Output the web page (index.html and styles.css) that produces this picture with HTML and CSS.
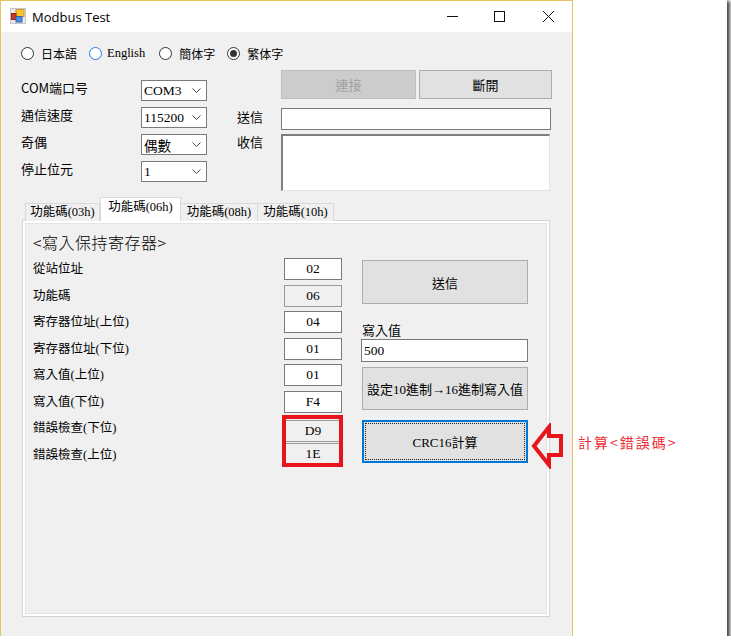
FILE: index.html
```html
<!DOCTYPE html>
<html lang="zh-Hant">
  <head>
    <meta charset="UTF-8" />
    <title>Modbus Test</title>
    <link rel="stylesheet" href="styles.css">
  </head>
  <body>
    <div class="shot">
      <div class="window">
        <div class="titlebar">
          <svg class="app-icon" width="16" height="16" viewBox="0 0 16 16">
            <rect x="0.5" y="0.5" width="15" height="15" fill="#e9e9e9" stroke="#c8c8c8" />
            <rect x="6" y="1.5" width="8" height="7" fill="#f7c531" stroke="#d9922a" />
            <rect x="1.5" y="5.5" width="4.5" height="6" fill="#d8332a" stroke="#9c1f18" />
            <rect x="6" y="8.5" width="6" height="5.5" fill="#4d8fe0" stroke="#2d62b5" />
          </svg>
          <span class="title">Modbus Test</span>
          <div class="caption-btns">
            <svg class="cap cap-min" width="11" height="11" viewBox="0 0 11 11"><line x1="0" y1="5.5" x2="11" y2="5.5" stroke="#111" /></svg>
            <svg class="cap cap-max" width="11" height="11" viewBox="0 0 11 11"><rect x="0.5" y="0.5" width="10" height="10" fill="none" stroke="#111" /></svg>
            <svg class="cap cap-close" width="11" height="11" viewBox="0 0 11 11"><path d="M0 0 L11 11 M11 0 L0 11" stroke="#111" /></svg>
          </div>
        </div>

        <div class="client">
          <div class="langs">
            <label class="radio"><span class="dot"></span><span>日本語</span></label>
            <label class="radio hover"><span class="dot"></span><span>English</span></label>
            <label class="radio"><span class="dot"></span><span>簡体字</span></label>
            <label class="radio checked"><span class="dot"></span><span>繁体字</span></label>
          </div>

          <div class="conn">
            <div class="serial">
              <span class="lbl">COM端口号</span>
              <div class="combo"><span>COM3</span><svg class="chev" width="9" height="5" viewBox="0 0 9 5"><path d="M0.5 0.5 L4.5 4.5 L8.5 0.5" fill="none" stroke="#444" /></svg></div>
              <span class="lbl">通信速度</span>
              <div class="combo"><span>115200</span><svg class="chev" width="9" height="5" viewBox="0 0 9 5"><path d="M0.5 0.5 L4.5 4.5 L8.5 0.5" fill="none" stroke="#444" /></svg></div>
              <span class="lbl">奇偶</span>
              <div class="combo"><span>偶數</span><svg class="chev" width="9" height="5" viewBox="0 0 9 5"><path d="M0.5 0.5 L4.5 4.5 L8.5 0.5" fill="none" stroke="#444" /></svg></div>
              <span class="lbl">停止位元</span>
              <div class="combo"><span>1</span><svg class="chev" width="9" height="5" viewBox="0 0 9 5"><path d="M0.5 0.5 L4.5 4.5 L8.5 0.5" fill="none" stroke="#444" /></svg></div>
            </div>

            <div class="io">
              <div class="io-buttons">
                <button class="btn btn-connect" disabled>連接</button>
                <button class="btn btn-close">斷開</button>
              </div>
              <div class="io-row">
                <span class="lbl">送信</span>
                <div class="textbox send-box"></div>
              </div>
              <div class="io-row recv-row">
                <span class="lbl">收信</span>
                <div class="recv-box"></div>
              </div>
            </div>
          </div>

          <div class="tabs">
            <div class="tab-heads">
              <span class="tab t1">功能碼(03h)</span>
              <span class="tab t2 active">功能碼(06h)</span>
              <span class="tab t3">功能碼(08h)</span>
              <span class="tab t4">功能碼(10h)</span>
            </div>
            <div class="tab-page">
              <div class="heading">&lt;寫入保持寄存器&gt;</div>
              <div class="regs">
                <span class="reg-lbl">從站位址</span><div class="cell">02</div>
                <span class="reg-lbl">功能碼</span><div class="cell readonly">06</div>
                <span class="reg-lbl">寄存器位址(上位)</span><div class="cell">04</div>
                <span class="reg-lbl">寄存器位址(下位)</span><div class="cell">01</div>
                <span class="reg-lbl">寫入值(上位)</span><div class="cell">01</div>
                <span class="reg-lbl">寫入值(下位)</span><div class="cell">F4</div>
                <span class="reg-lbl">錯誤檢查(下位)</span><div class="cell readonly crc-lo">D9</div>
                <span class="reg-lbl">錯誤檢查(上位)</span><div class="cell readonly crc-hi">1E</div>

                <div class="actions">
                  <button class="btn btn-send">送信</button>
                  <span class="lbl value-lbl">寫入值</span>
                  <div class="textbox value-box">500</div>
                  <button class="btn btn-set">設定10進制→16進制寫入值</button>
                  <button class="btn btn-crc">CRC16計算</button>
                </div>
              </div>
            </div>
          </div>
        </div>
      </div>

      <!-- annotation drawn over the screenshot -->
      <div class="mark"></div>
      <svg class="arrow" width="36" height="46" viewBox="530 423 36 46">
        <polygon points="534,446 549,427 549,436 561,436 561,455 549,455 549,465" fill="none" stroke="#e8141c" stroke-width="4" stroke-linejoin="miter" />
      </svg>
      <div class="note">計算&lt;錯誤碼&gt;</div>
    </div>
  </body>
</html>
```

FILE: styles.css
```css
body {
  margin: 0;
  background: #fff;
  font-family: "Liberation Serif", "Noto Sans CJK TC", serif;
  font-size: 12px;
  color: #000;
}
.shot {
  position: relative;
  width: 727px;
  height: 636px;
  display: flex;
  background: #fff;
  box-shadow: 2px 2px 3px 1px rgba(0, 0, 0, 0.7);
}
.window {
  width: 571px;
  height: 635px;
  border: 1px solid #e6c55e;
  border-bottom: 0;
  display: flex;
  flex-direction: column;
}
.titlebar {
  height: 31px;
  flex-shrink: 0;
  background: #fff;
  display: flex;
  align-items: center;
  padding-left: 9px;
}
.app-icon {
  display: block;
  margin-top: -1px;
}
.title {
  margin-left: 6px;
  font-family: "Open Sans", "Noto Sans", sans-serif;
  font-size: 13px;
  color: #000;
}
.caption-btns {
  margin-left: auto;
  padding-right: 18px;
  display: flex;
  align-items: center;
}
.cap {
  display: block;
}
.cap-max {
  margin-left: 36px;
}
.cap-close {
  margin-left: 38px;
}
.client {
  flex: 1;
  background: #f0f0f0;
  padding-left: 20px;
}
.lbl {
  font-family: "Noto Sans CJK TC", sans-serif;
  font-size: 13px;
  line-height: 16px;
}

/* language radios */
.langs {
  margin-top: 15px;
  height: 13px;
  display: flex;
  align-items: center;
}
.radio {
  display: flex;
  align-items: center;
  margin-right: 12px;
  font-family: "Noto Sans CJK TC", sans-serif;
  font-size: 12px;
  line-height: 13px;
}
.radio.hover {
  margin-right: 14px;
  font-family: "Liberation Serif", serif;
  font-size: 12.5px;
}
.dot {
  width: 13px;
  height: 13px;
  box-sizing: border-box;
  border: 1px solid #333;
  border-radius: 50%;
  background: #fff;
  margin-right: 7px;
  display: flex;
  align-items: center;
  justify-content: center;
}
.hover .dot {
  border-color: #1e7be0;
  margin-right: 5px;
}
.checked .dot::after {
  content: "";
  width: 7px;
  height: 7px;
  border-radius: 50%;
  background: #333;
}

/* serial settings + send/receive */
.conn {
  margin-top: 10px;
  display: flex;
}
.serial {
  width: 186px;
  padding-top: 10px;
  display: grid;
  grid-template-columns: 120px 66px;
  grid-auto-rows: 21px;
  row-gap: 6px;
}
.serial .lbl {
  align-self: start;
}
.combo {
  box-sizing: border-box;
  border: 1px solid #7a7a7a;
  background: #fff;
  display: flex;
  align-items: center;
  padding-left: 2px;
  font-size: 13.5px;
}
.combo span {
  font-family: "Liberation Serif", "Noto Sans CJK TC", serif;
}
.chev {
  margin-left: auto;
  margin-right: 5px;
}
.io {
  margin-left: 30px;
  width: 315px;
}
.io-buttons {
  padding-left: 44px;
  display: flex;
  gap: 3px;
}
.btn {
  box-sizing: border-box;
  border: 1px solid #adadad;
  background: #e1e1e1;
  font-family: "Liberation Serif", "Noto Sans CJK TC", serif;
  font-size: 13px;
  color: #000;
  padding: 0;
}
.btn-connect {
  width: 135px;
  height: 29px;
  background: #cccccc;
  border-color: #bfbfbf;
  color: #a0a0a0;
}
.btn-close {
  width: 133px;
  height: 29px;
}
.io-row {
  margin-top: 9px;
  display: flex;
}
.io-row .lbl {
  width: 44px;
  margin-top: 1px;
}
.recv-row {
  margin-top: 4px;
}
.recv-row .lbl {
  margin-top: 0;
}
.textbox {
  box-sizing: border-box;
  border: 1px solid #7a7a7a;
  background: #fff;
  font-size: 13.5px;
  line-height: 21px;
  padding-left: 2px;
}
.send-box {
  width: 270px;
  height: 22px;
}
.recv-box {
  width: 269px;
  height: 57px;
  box-sizing: border-box;
  background: #fff;
  border-top: 2px solid #7f7f7f;
  border-left: 2px solid #7f7f7f;
  border-right: 1px solid #e3e3e3;
  border-bottom: 1px solid #e3e3e3;
}

/* tab control */
.tabs {
  margin-top: 7px;
  margin-left: 1px;
}
.tab-heads {
  height: 23px;
  padding-left: 3px;
  display: flex;
  align-items: flex-end;
  position: relative;
  z-index: 1;
  margin-bottom: -1px;
}
.tab {
  box-sizing: border-box;
  height: 18px;
  border: 1px solid #d9d9d9;
  border-bottom: 0;
  background: #f0f0f0;
  text-align: center;
  font-size: 12.5px;
  line-height: 17px;
}
.t1 { width: 75px; }
.t2 { width: 81px; }
.t3 { width: 77px; border-left: 0; }
.t4 { width: 76px; border-left: 0; }
.tab.active {
  height: 24px;
  background: #fff;
  line-height: 19px;
}
.tab-page {
  width: 528px;
  height: 397px;
  box-sizing: border-box;
  border: 1px solid #d4d4d4;
  box-shadow: inset 0 0 0 2px #fff, inset 0 0 0 3px #e4e4e4;
  background: #f0f0f0;
  padding: 11px 0 0 10px;
}
.heading {
  font-family: "Noto Sans CJK TC", sans-serif;
  font-weight: 300;
  font-size: 16px;
  line-height: 20px;
  letter-spacing: 0.5px;
}
.regs {
  margin-top: 4px;
  display: grid;
  grid-template-columns: 251px 58px 20px 166px;
  grid-template-rows: repeat(8, 26.5px);
}
.reg-lbl {
  grid-column: 1;
  align-self: center;
  font-family: "Liberation Serif", "Noto Sans CJK TC", serif;
  font-size: 12.5px;
  line-height: 16px;
}
.cell {
  grid-column: 2;
  align-self: center;
  height: 22px;
  box-sizing: border-box;
  border: 1px solid #7a7a7a;
  background: #fff;
  text-align: center;
  font-size: 13.5px;
  line-height: 20px;
}
.cell.readonly {
  background: #f0f0f0;
  border-color: #9a9a9a;
}
.crc-lo {
  margin-top: 5px;
}
.crc-hi {
  margin-top: -1px;
}
.actions {
  grid-column: 4;
  grid-row: 1 / span 8;
  padding-top: 4px;
  display: flex;
  flex-direction: column;
  align-items: flex-start;
}
.btn-send {
  width: 166px;
  height: 44px;
}
.value-lbl {
  margin-top: 18px;
}
.value-box {
  margin-top: 1px;
  margin-left: -1px;
  width: 167px;
  height: 23px;
}
.btn-set {
  margin-top: 5px;
  width: 166px;
  height: 43px;
}
.btn-crc {
  margin-top: 10px;
  width: 166px;
  height: 43px;
  border-color: #0078d7;
  box-shadow: inset 0 0 0 1px #0078d7;
  outline: 1px dotted #222;
  outline-offset: -4px;
}

/* red annotation */
.mark {
  position: absolute;
  left: 282px;
  top: 415px;
  width: 61px;
  height: 52px;
  box-sizing: border-box;
  border: 4px solid #e8141c;
}
.arrow {
  position: absolute;
  left: 530px;
  top: 423px;
}
.note {
  position: absolute;
  left: 578px;
  top: 433px;
  font-family: "Noto Sans CJK TC", sans-serif;
  font-size: 14px;
  line-height: 18px;
  letter-spacing: 2px;
  color: #ec2b35;
}
```
